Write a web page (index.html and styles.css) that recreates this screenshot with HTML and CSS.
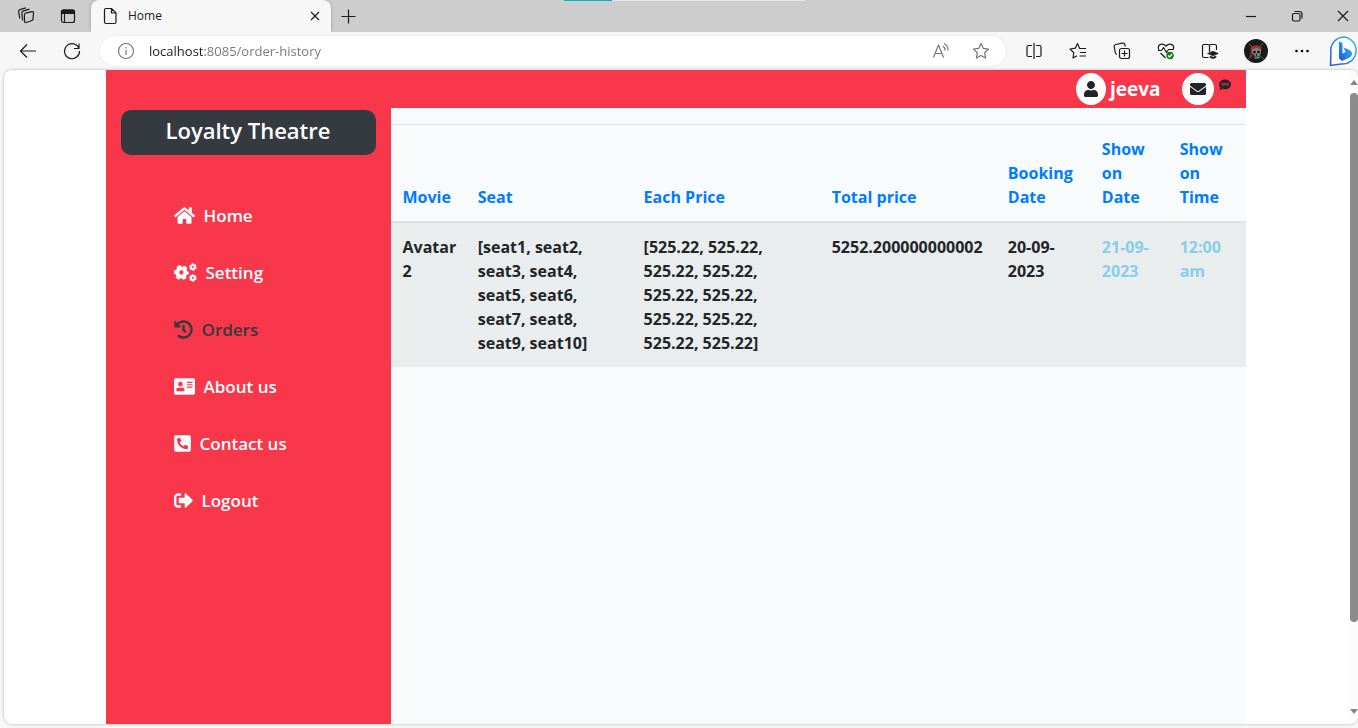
FILE: index.html
```html
<!DOCTYPE html>
<html lang="en">
<head>
<meta charset="utf-8">
<meta name="viewport" content="width=device-width, initial-scale=1">
<title>Home</title>
<link rel="stylesheet" href="styles.css">
</head>
<body>
<div class="browser">
  <div class="load-strip" aria-hidden="true"><span class="load-strip-done"></span></div>
  <header class="tab-strip">
    <button class="strip-btn" aria-label="Workspaces"><svg class="line-icon" width="18" height="18" viewBox="0 0 18 18"><path d="M8.600 6.200 14.800 4.600q1.700-.2 1.700 1.200l-.5 6.400q-.2 1.200-1.500 1.600l-5.500 1.700q-1.500.3-1.500-1.100L7.400 7.600q0-1 1.200-1.400z"/><path d="M5.600 13.500 4.800 6q0-1.400 1.200-1.900l6.500-1.900"/><path d="M2.800 11.500 1.600 4.500q0-1.400 1.200-1.900L9 .9"/></svg></button>
    <button class="strip-btn" aria-label="Tab actions"><svg class="line-icon" width="16" height="16" viewBox="0 0 16 16"><rect x="1.500" y="2" width="13" height="12.500" rx="2"/><path class="solid" d="M1.500 5.500V3.500q0-1.500 1.500-1.500h10q1.500 0 1.500 1.500v2z"/><path d="M4.500 6v8"/></svg></button>
    <div class="tab">
      <svg class="line-icon" width="14" height="18" viewBox="0 0 14 18"><path d="M1.500 3q0-1.500 1.500-1.500h5.500l4.500 4.500v9q0 1.500-1.500 1.500H3q-1.500 0-1.500-1.500zM8.500 1.500V6H13"/></svg>
      <span class="tab-title">Home</span>
      <button class="tab-close" aria-label="Close tab"><svg class="line-icon" width="10" height="10" viewBox="0 0 10 10"><path d="M1 1l8 8M9 1L1 9"/></svg></button>
    </div>
    <button class="new-tab" aria-label="New tab"><svg class="line-icon" width="16" height="16" viewBox="0 0 16 16"><path d="M8.500 1.500v14M1.500 8.500h14"/></svg></button>
    <div class="window-buttons">
      <button class="window-btn" aria-label="Minimize"><svg class="line-icon" width="12" height="12" viewBox="0 0 12 12"><path d="M1 6.500h10"/></svg></button>
      <button class="window-btn" aria-label="Restore"><svg class="line-icon" width="12" height="12" viewBox="0 0 12 12"><rect x="1.500" y="3.500" width="7.500" height="7.500" rx="1.500"/><path d="M3.500 1.500H8.500q2.500 0 2.500 2.500v4.500"/></svg></button>
      <button class="window-btn window-close" aria-label="Close"><svg class="line-icon" width="12" height="12" viewBox="0 0 12 12"><path d="M1 1l10 10M11 1L1 11"/></svg></button>
    </div>
  </header>

  <div class="toolbar">
    <button class="tool-btn" aria-label="Back"><svg class="line-icon" width="18" height="16" viewBox="0 0 18 16"><path d="M17 8H1.500M8 1.500 1.500 8 8 14.500"/></svg></button>
    <button class="tool-btn" aria-label="Refresh"><svg class="line-icon" width="18" height="18" viewBox="0 0 18 18"><path d="M16 6.500A7.500 7.500 0 1 0 16.500 9M16 1.500v5h-5"/></svg></button>
    <div class="address-bar">
      <button class="address-btn" aria-label="Site information"><svg class="line-icon muted" width="18" height="18" viewBox="0 0 18 18"><circle cx="9" cy="9" r="7.500"/><path d="M9 8v5M9 5v1.500"/></svg></button>
      <input class="address-input" type="text" aria-label="Address" value="localhost:8085/order-history">
      <button class="address-btn" aria-label="Read aloud"><svg class="line-icon muted" width="18" height="18" viewBox="0 0 18 18"><path d="M1.500 15.500 6.500 3l5 12.500M3.200 11.500h6.600M11 4q2 1.500 2 4.500M12 1.500q4 2 4 7"/></svg></button>
      <button class="address-btn" aria-label="Add to favorites"><svg class="line-icon muted" width="18" height="18" viewBox="0 0 18 18"><path d="M9 1.500l2.300 4.900 5.200.7-3.800 3.700.9 5.300L9 13.500l-4.600 2.600.9-5.300L1.500 7.100l5.200-.7z"/></svg></button>
    </div>
    <button class="tool-btn" aria-label="Split screen"><svg class="line-icon" width="18" height="18" viewBox="0 0 18 18"><path d="M7 3.500H3.500q-1.500 0-1.500 1.500v8q0 1.500 1.500 1.500H7M11 3.500h3.500q1.500 0 1.500 1.500v8q0 1.500-1.500 1.500H11M9 1v16"/></svg></button>
    <button class="tool-btn" aria-label="Favorites"><svg class="line-icon" width="18" height="18" viewBox="0 0 18 18"><path d="M17 6.500H10.700L8.500 1.500 6.300 6.200 1 7l3.800 3.700L4 16l4-2.200M11 10.500h6M10.500 14h6.500"/></svg></button>
    <button class="tool-btn" aria-label="Collections"><svg class="line-icon" width="18" height="18" viewBox="0 0 18 18"><rect x="6.500" y="6.500" width="10" height="10" rx="2"/><path d="M11.500 8.500v6M8.500 11.500h6M4 12.500Q2.500 12 2.300 10.500L1.200 4.700Q1 3 2.700 2.500L9.500 1.200q2-.2 2.500 1.600l.4 1.700"/></svg></button>
    <button class="tool-btn" aria-label="Browser essentials"><svg class="line-icon" width="18" height="18" viewBox="0 0 18 18"><path d="M2 8C-.5 3 5 0 9 4c4-4 9.500-1 7 4M1 8.500h3.500l2-3 3 5 2-3h5M3.500 11l5 5"/><circle class="ok-dot" cx="13" cy="13.500" r="3.700"/><path class="ok-tick" d="M11 13.500l1.500 1.500 2.500-3"/></svg></button>
    <button class="tool-btn" aria-label="Immersive reader"><svg class="line-icon" width="18" height="18" viewBox="0 0 18 18"><path d="M7.500 15.500H3q-1.500 0-1.500-1.500V4Q1.500 2.500 3 2.500h4q1.500 0 1.500 1.500v6M8.500 4q0-1.500 1.500-1.500h4q1.500 0 1.500 1.500v4"/><path class="solid" stroke-width=".6" d="M6.500 11.500l5.500-2.300 5.300 2.300-5.300 2.300zM9 14v1.500q3 2 6 0V14l-3 1.200z"/></svg></button>
    <button class="tool-btn profile" aria-label="Profile"><svg width="24" height="24" viewBox="0 0 24 24"><circle cx="12" cy="12" r="12" fill="#171b1b"/><path d="M5 5l4 4M19 4l-4 5M4 20l5-4M20 20l-5-4" stroke="#3f4441" stroke-width="1.500"/><path d="M8 10q4-2 9 0v4l-1.500 2.500v3h-5v-3L8 14z" fill="#85877f"/><path d="M7 8Q12 4.500 17.500 8v2Q12 8 8 10.500L7.500 17 6 19z" fill="#b32a29"/><path d="M9.500 12h2v2h-2zM13.500 12h2v2h-2zM12 15h1v1.500h-1zM10.500 17.500h4.500" fill="#171b1b" stroke="#171b1b" stroke-width=".5"/></svg></button>
    <button class="tool-btn" aria-label="Settings and more"><svg width="16" height="4" viewBox="0 0 16 4"><circle cx="2.500" cy="2" r="1.300"/><circle cx="8" cy="2" r="1.300"/><circle cx="13.500" cy="2" r="1.300"/></svg></button>
    <button class="tool-btn bing" aria-label="Bing chat"><svg width="30" height="32" viewBox="0 0 30 32"><defs><linearGradient id="bing" x1="1" y1="0" x2="0" y2="1"><stop offset="0" stop-color="#35c1ec"/><stop offset="1" stop-color="#1b58d8"/></linearGradient></defs><path d="M15 2a13.500 13.500 0 1 1-3 27L1.500 30.500 2 18A13.500 13.500 0 0 1 15 2z" fill="#fff" stroke="url(#bing)" stroke-width="1.500"/><path d="M10 6.500l3.500 1.500v10.500L16.500 17l-2-4.500 6 2.500q3 1.500 2.500 4.500-.5 2-2.500 3L13 26l-3-2.500z" fill="url(#bing)"/></svg></button>
  </div>

  <div class="viewport">
    <div class="page">
      <div class="container">
        <aside class="sidebar">
          <h1 class="brand">Loyalty Theatre</h1>
          <nav class="menu">
            <a class="menu-link" href="#home"><svg class="icon" width="21" height="19" viewBox="0 0 576 512"><path d="M280.370 148.260L96 300.110V464a16 16 0 0 0 16 16l112.060-.29a16 16 0 0 0 15.920-16V368a16 16 0 0 1 16-16h64a16 16 0 0 1 16 16v95.640a16 16 0 0 0 16 16.050L464 480a16 16 0 0 0 16-16V300L295.670 148.260a12.190 12.190 0 0 0-15.300 0zM571.600 251.470L488 182.560V44.050a12 12 0 0 0-12-12h-56a12 12 0 0 0-12 12v72.610L318.470 43a48 48 0 0 0-61 0L4.340 251.470a12 12 0 0 0-1.600 16.900l25.500 31A12 12 0 0 0 45.150 301l235.220-193.740a12.190 12.190 0 0 1 15.300 0L530.900 301a12 12 0 0 0 16.900-1.600l25.500-31a12 12 0 0 0-1.700-16.930z"/></svg>Home</a>
            <a class="menu-link" href="#setting"><svg class="icon" width="23" height="19" viewBox="0 0 640 512"><g fill="none" stroke="currentColor"><circle cx="205" cy="256" r="115" stroke-width="110"/><circle cx="205" cy="256" r="180" stroke-width="56" stroke-dasharray="110 78.500" stroke-dashoffset="55"/><circle cx="525" cy="105" r="56" stroke-width="56"/><circle cx="525" cy="105" r="88" stroke-width="32" stroke-dasharray="54 38.150"/><circle cx="525" cy="407" r="56" stroke-width="56"/><circle cx="525" cy="407" r="88" stroke-width="32" stroke-dasharray="54 38.150"/></g></svg>Setting</a>
            <a class="menu-link active" href="#orders" aria-current="page"><svg class="icon" width="19" height="19" viewBox="0 0 512 512"><path d="M504 255.531c.253 136.640-111.180 248.372-247.820 248.468-59.015.042-113.223-20.530-155.822-54.911-11.077-8.940-11.905-25.541-1.839-35.607l11.267-11.267c8.609-8.609 22.353-9.551 31.891-1.984C173.062 425.135 212.781 440 256 440c101.705 0 184-82.311 184-184 0-101.705-82.311-184-184-184-48.814 0-93.149 18.969-126.068 49.932l50.754 50.754c10.080 10.080 2.941 27.314-11.313 27.314H24c-8.837 0-16-7.163-16-16V38.627c0-14.254 17.234-21.393 27.314-11.314l49.372 49.372C129.209 34.136 189.552 8 256 8c136.810 0 247.747 110.780 248 247.531zm-180.912 78.784l9.823-12.630c8.138-10.463 6.253-25.542-4.210-33.679L288 256.349V152c0-13.255-10.745-24-24-24h-16c-13.255 0-24 10.745-24 24v135.651l65.409 50.874c10.463 8.137 25.541 6.253 33.679-4.210z"/></svg>Orders</a>
            <a class="menu-link" href="#about"><svg class="icon" width="21" height="19" viewBox="0 0 576 512"><path fill-rule="evenodd" d="M48 32h480a48 48 0 0 1 48 48v352a48 48 0 0 1-48 48H48a48 48 0 0 1-48-48V80a48 48 0 0 1 48-48zM176 128a64 64 0 1 0 0 128 64 64 0 0 0 0-128zM64 358c0 14 10 26 22 26h180c12 0 22-12 22-26v-19c0-32-30-58-67-58-11 0-19 7-45 7s-35-7-45-7c-37 0-67 26-67 58zM360 128h144a8 8 0 0 1 8 8v16a8 8 0 0 1-8 8H360a8 8 0 0 1-8-8v-16a8 8 0 0 1 8-8zM360 192h144a8 8 0 0 1 8 8v16a8 8 0 0 1-8 8H360a8 8 0 0 1-8-8v-16a8 8 0 0 1 8-8zM360 256h144a8 8 0 0 1 8 8v16a8 8 0 0 1-8 8H360a8 8 0 0 1-8-8v-16a8 8 0 0 1 8-8z"/></svg>About us</a>
            <a class="menu-link" href="#contact"><svg class="icon" width="17" height="19" viewBox="0 0 448 512"><rect y="32" width="448" height="448" rx="48"/><path class="cutout" transform="translate(72 104) scale(.6)" d="M497.390 361.800l-112-48a24 24 0 0 0-28 6.900l-49.600 60.600A370.660 370.660 0 0 1 130.600 204.110l60.600-49.600a23.940 23.940 0 0 0 6.900-28l-48-112A24.160 24.160 0 0 0 122.600.61l-104 24A24 24 0 0 0 0 48c0 256.500 207.900 464 464 464a24 24 0 0 0 23.400-18.600l24-104a24.290 24.290 0 0 0-14.010-27.600z"/></svg>Contact us</a>
            <a class="menu-link" href="#logout"><svg class="icon" width="19" height="19" viewBox="0 0 512 512"><path d="M497 273L329 441c-15 15-41 4.500-41-17v-96H152c-13.300 0-24-10.700-24-24v-96c0-13.300 10.700-24 24-24h136V88c0-21.400 25.900-32 41-17l168 168c9.300 9.400 9.300 24.600 0 34zM192 436v-40c0-6.600-5.400-12-12-12H96c-17.700 0-32-14.300-32-32V160c0-17.700 14.300-32 32-32h84c6.600 0 12-5.400 12-12V76c0-6.600-5.400-12-12-12H96c-53 0-96 43-96 96v192c0 53 43 96 96 96h84c6.600 0 12-5.400 12-12z"/></svg>Logout</a>
          </nav>
        </aside>
        <main class="content">
          <div class="user-bar">
            <span class="round user-round"><svg class="icon" width="14" height="16" viewBox="0 0 448 512"><path d="M224 256c70.700 0 128-57.300 128-128S294.700 0 224 0 96 57.300 96 128s57.300 128 128 128zm89.600 32h-16.700c-22.200 10.200-46.900 16-72.900 16s-50.600-5.800-72.900-16h-16.700C60.200 288 0 348.200 0 422.400V464c0 26.500 21.500 48 48 48h352c26.500 0 48-21.500 48-48v-41.600c0-74.200-60.200-134.400-134.400-134.400z"/></svg></span>
            <span class="user-name">jeeva</span>
            <button class="round mail-round" aria-label="Messages"><svg class="icon" width="16" height="16" viewBox="0 0 512 512"><path d="M502.300 190.800c3.900-3.100 9.700-.2 9.700 4.700V400c0 26.500-21.500 48-48 48H48c-26.500 0-48-21.500-48-48V195.600c0-5 5.700-7.800 9.700-4.700 22.400 17.400 52.100 39.500 154.100 113.600 21.100 15.400 56.700 47.800 92.200 47.600 35.700.3 72-32.800 92.300-47.600 102-74.100 131.600-96.300 154-113.700zM256 320c23.200.4 56.600-29.200 73.400-41.400 132.700-96.300 142.800-104.700 173.400-128.700 5.800-4.500 9.200-11.500 9.200-18.900v-19c0-26.500-21.500-48-48-48H48c-26.500 0-48 21.500-48 48v19c0 7.400 3.400 14.300 9.200 18.900 30.600 23.900 40.700 32.400 173.400 128.700 16.800 12.200 50.200 41.800 73.400 41.400z"/></svg></button>
            <svg class="icon sms" width="12" height="12" viewBox="0 0 24 24"><path d="M12 1c6.600 0 12 4.500 12 9.800s-5.400 9.700-12 9.700c-1.700 0-3.300-.3-4.700-.8C5.500 21.200 3 22.500.5 22.500c1.200-1.300 2-3 2.200-5.300C1 15.500 0 13.400 0 10.800 0 5.500 5.400 1 12 1z"/><path class="sms-mark" d="M8 8H5.500v2.500H8V13H5.200M10 13.500V8l2 3 2-3v5.500M19 8h-2.500v2.500H19V13h-2.800"/></svg>
          </div>
          <table class="orders">
            <colgroup><col class="c-movie"><col class="c-seat"><col class="c-each"><col class="c-total"><col class="c-booking"><col class="c-show"><col class="c-show"></colgroup>
            <thead>
              <tr><th>Movie</th><th>Seat</th><th>Each Price</th><th>Total price</th><th>Booking Date</th><th>Show on Date</th><th>Show on Time</th></tr>
            </thead>
            <tbody>
              <tr><td>Avatar 2</td><td>[seat1, seat2, seat3, seat4, seat5, seat6, seat7, seat8, seat9, seat10]</td><td>[525.22, 525.22, 525.22, 525.22, 525.22, 525.22, 525.22, 525.22, 525.22, 525.22]</td><td>5252.200000000002</td><td>20-09-<wbr>2023</td><td class="show">21-09-<wbr>2023</td><td class="show">12:00 am</td></tr>
            </tbody>
          </table>
        </main>
      </div>
    </div>
    <div class="scrollbar" aria-hidden="true">
      <svg width="8" height="5" viewBox="0 0 8 5"><path d="M0 5l4-5 4 5z"/></svg>
      <span class="track"><span class="thumb"></span></span>
      <svg width="8" height="5" viewBox="0 0 8 5"><path d="M0 0l4 5 4-5z"/></svg>
    </div>
  </div>
</div>
</body>
</html>
```

FILE: styles.css
```css
* {
  box-sizing: border-box;
}

body {
  margin: 0;
  font-family: "Segoe UI", "Open Sans", "Noto Sans", sans-serif;
  font-size: 16px;
  line-height: 24px;
  color: #212529;
}

button {
  display: flex;
  align-items: center;
  justify-content: center;
  padding: 0;
  border: 0;
  background: none;
  color: inherit;
}

svg {
  flex: none;
}

.line-icon {
  fill: none;
  stroke: #1b1b1b;
  stroke-width: 1.2;
  stroke-linejoin: round;
}

.line-icon.muted {
  stroke: #767676;
}

.line-icon .solid {
  fill: #1b1b1b;
}

.line-icon .ok-dot {
  fill: #107c10;
  stroke: none;
}

.line-icon .ok-tick {
  stroke: #fff;
}

/* Browser frame */
.browser {
  position: relative;
  display: flex;
  flex-direction: column;
  height: 100vh;
  overflow: hidden;
  background: #f7f7f7;
}

.load-strip {
  position: absolute;
  top: 0;
  left: 41.5%;
  width: 241px;
  height: 1px;
  background: #e6e6e6;
}

.load-strip-done {
  display: block;
  width: 20%;
  height: 1px;
  background: #00b7c3;
}

.tab-strip {
  display: flex;
  flex: none;
  height: 32px;
  padding-left: 5px;
  background: #cdcdcd;
}

.strip-btn {
  width: 42px;
}

.tab {
  display: flex;
  align-items: center;
  gap: 11px;
  width: 240px;
  margin-left: 2px;
  padding: 0 10px 0 12px;
  border-radius: 8px 8px 0 0;
  background: #f7f7f7;
  box-shadow: 0 0 3px rgba(0, 0, 0, 0.3);
  clip-path: inset(0 -4px 0 -4px);
}

.tab-title {
  flex: 1;
  font-size: 12px;
  line-height: 16px;
  color: #1b1b1b;
}

.tab-close {
  width: 12px;
  height: 16px;
}

.new-tab {
  width: 34px;
}

.window-buttons {
  display: flex;
  margin-left: auto;
}

.window-btn {
  width: 46px;
}

.window-close {
  width: 38px;
  padding-left: 8px;
}

.toolbar {
  display: flex;
  flex: none;
  align-items: center;
  height: 38px;
  padding-left: 6px;
}

.tool-btn {
  flex: none;
  width: 44px;
  height: 32px;
}

.profile {
  width: 48px;
}

.bing {
  width: 34px;
  padding-left: 6px;
}

.address-bar {
  display: flex;
  flex: 1;
  align-items: center;
  height: 30px;
  margin: 0 6px;
  padding: 0 5px 0 6px;
  border-radius: 15px;
  background: #fff;
  box-shadow: 0 0 3px rgba(0, 0, 0, 0.08);
}

.address-btn {
  width: 40px;
  height: 30px;
}

.address-input {
  flex: 1;
  min-width: 0;
  padding: 0 3px;
  border: 0;
  outline: 0;
  font: 13px/20px "Segoe UI", "Open Sans", "Noto Sans", sans-serif;
  color: #767676;
  /* the host name is darker than the port and path */
  background: linear-gradient(90deg, #1b1b1b 58px, #767676 58px);
  background-clip: text;
  -webkit-background-clip: text;
  -webkit-text-fill-color: transparent;
}

.viewport {
  display: flex;
  flex: 1;
  min-height: 0;
  margin: 0 0 4px 4px;
  border-radius: 8px;
  overflow: hidden;
  background: #fff;
  box-shadow: 0 0 3px rgba(0, 0, 0, 0.3);
}

.page {
  flex: 1;
  min-width: 0;
  overflow: hidden;
}

.scrollbar {
  display: flex;
  flex-direction: column;
  align-items: flex-end;
  gap: 8px;
  width: 11px;
  padding: 10px 0;
  background: #fcfcfc;
  fill: #858585;
}

.track {
  flex: 1;
  width: 8px;
}

.thumb {
  display: block;
  height: 87%;
  border-radius: 4px;
  background: #8b8b8b;
}

/* Loyalty Theatre page */
.container {
  display: flex;
  width: 100%;
  max-width: 1140px;
  min-height: 100%;
  margin: 0 auto;
  background: #f7fbfc;
}

.sidebar {
  width: 25%;
  padding: 40px 15px 0;
  background: #f9374b;
}

.brand {
  margin: 0 0 32px;
  padding: 4px 0 9px;
  border-radius: 10px;
  background: #343a40;
  font-size: 22px;
  font-weight: 600;
  line-height: 32px;
  text-align: center;
  color: #fff;
}

.menu {
  display: flex;
  flex-direction: column;
  padding-left: 53px;
}

.menu-link {
  display: flex;
  align-items: center;
  gap: 9px;
  padding: 15px 0;
  font-size: 17px;
  font-weight: 600;
  line-height: 27px;
  text-decoration: none;
  color: #fff;
}

.menu-link.active {
  color: #343a40;
}

.icon {
  fill: currentColor;
}

.icon .cutout {
  fill: #f9374b;
}

.content {
  flex: 1;
  min-width: 0;
}

.user-bar {
  display: flex;
  align-items: center;
  justify-content: flex-end;
  gap: 5px;
  height: 38px;
  padding-right: 15px;
  background: #f9374b;
}

.round {
  display: flex;
  align-items: center;
  justify-content: center;
  height: 32px;
  border-radius: 50%;
  background: #fff;
}

.user-round {
  width: 30px;
}

.mail-round {
  width: 32px;
}

.user-name {
  margin: 0 16px 0 -1px;
  font-size: 19px;
  font-weight: 700;
  color: #fff;
}

.sms {
  margin-bottom: 8px;
}

.sms .sms-mark {
  fill: none;
  stroke: #f9374b;
  stroke-width: 1.3;
}

.orders {
  width: 100%;
  margin-top: 16px;
  border-collapse: collapse;
  table-layout: fixed;
  font-weight: 700;
}

.c-movie { width: 8.8%; }
.c-seat { width: 19.4%; }
.c-each { width: 22%; }
.c-total { width: 20.6%; }
.c-booking { width: 11%; }
.c-show { width: 9.1%; }

.orders th,
.orders td {
  padding: 12px;
  text-align: left;
}

.orders th {
  border-top: 1px solid #dee2e6;
  border-bottom: 2px solid #dee2e6;
  vertical-align: bottom;
  color: #007bff;
}

.orders td {
  background: #e9eded;
  vertical-align: top;
}

.orders .show {
  color: #87ceeb;
}
```
